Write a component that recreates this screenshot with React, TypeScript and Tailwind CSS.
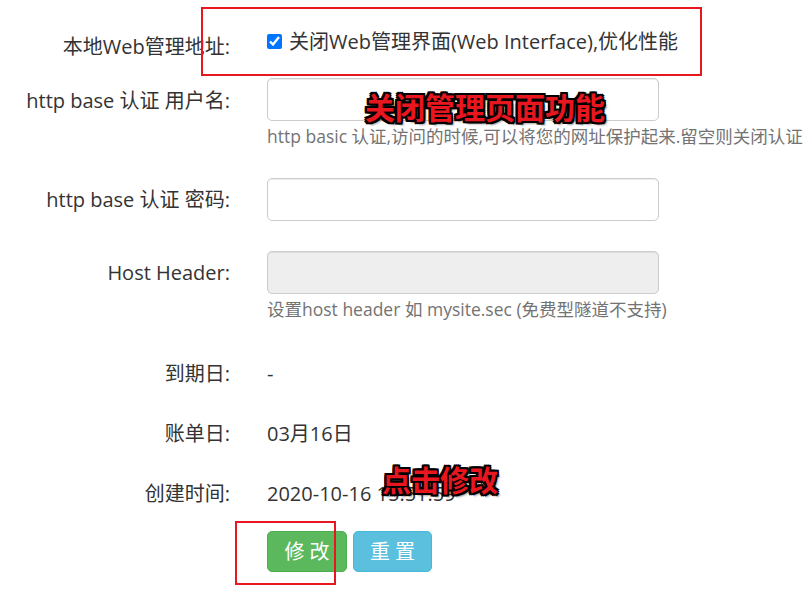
import React from "react";

const font = { fontFamily: '"Open Sans", "Noto Sans CJK SC", sans-serif' };

function Label({ children, pt }: { children: React.ReactNode; pt: string }) {
  return (
    <div className={`w-[230px] shrink-0 text-right text-[#333] whitespace-nowrap ${pt}`}>{children}</div>
  );
}

export default function App() {
  const outline =
    "[text-shadow:-2px_-2px_0_#000,2px_-2px_0_#000,-2px_2px_0_#000,2px_2px_0_#000,0_2px_0_#000,0_-2px_0_#000,2px_0_0_#000,-2px_0_0_#000,3px_3px_2px_rgba(0,0,0,0.35)]";
  return (
    <div
      className="relative w-[808px] h-[594px] overflow-hidden bg-white text-[20px] leading-[27px] text-[#333]"
      style={font}
    >
      <div className="pt-[28px]">
        {/* Row 1 */}
        <div className="flex items-start">
          <Label pt="pt-[5px]">本地Web管理地址:</Label>
          <div className="ml-[37px] flex items-center gap-[7px]">
            <input
              type="checkbox"
              defaultChecked
              className="m-0 w-[15px] h-[15px] accent-[#0075ff]"
            />
            <span className="whitespace-nowrap">关闭Web管理界面(Web Interface),优化性能</span>
          </div>
        </div>

        {/* Row 2 */}
        <div className="flex items-start mt-[18px]">
          <Label pt="pt-[9px]">http base 认证 用户名:</Label>
          <div className="ml-[37px] w-[392px]">
            <div className="h-[43px] w-full rounded-[5px] border border-[#ccc] bg-white shadow-[inset_0_1px_1px_rgba(0,0,0,0.075)]" />
            <div className="mt-[2px] whitespace-nowrap text-[17.5px] text-[#737373]">
              http basic 认证,访问的时候,可以将您的网址保护起来.留空则关闭认证
            </div>
          </div>
        </div>

        {/* Row 3 */}
        <div className="flex items-start mt-[28px]">
          <Label pt="pt-[8px]">http base 认证 密码:</Label>
          <div className="ml-[37px] w-[392px]">
            <div className="h-[43px] w-full rounded-[5px] border border-[#ccc] bg-white shadow-[inset_0_1px_1px_rgba(0,0,0,0.075)]" />
          </div>
        </div>

        {/* Row 4 */}
        <div className="flex items-start mt-[30px]">
          <Label pt="pt-[8px]">Host Header:</Label>
          <div className="ml-[37px] w-[392px]">
            <div className="h-[43px] w-full rounded-[5px] border border-[#ccc] bg-[#eee] shadow-[inset_0_1px_1px_rgba(0,0,0,0.075)]" />
            <div className="mt-[2px] whitespace-nowrap text-[17.5px] text-[#737373]">
              设置host header 如 mysite.sec (免费型隧道不支持)
            </div>
          </div>
        </div>

        {/* Row 5 */}
        <div className="flex items-start mt-[37px]">
          <Label pt="pt-0">到期日:</Label>
          <div className="ml-[37px]">-</div>
        </div>

        {/* Row 6 */}
        <div className="flex items-start mt-[33px]">
          <Label pt="pt-0">账单日:</Label>
          <div className="ml-[37px]">03月16日</div>
        </div>

        {/* Row 7 */}
        <div className="flex items-start mt-[33px]">
          <Label pt="pt-0">创建时间:</Label>
          <div className="ml-[37px] whitespace-nowrap">2020-10-16 15:51:59</div>
        </div>

        {/* Buttons */}
        <div className="flex mt-[24px] ml-[267px] gap-[6px]">
          <button className="h-[41px] w-[80px] rounded-[5px] border border-[#4cae4c] bg-[#5cb85c] text-white tracking-[5px] pl-[5px]">
            修改
          </button>
          <button className="h-[41px] w-[79px] rounded-[5px] border border-[#46b8da] bg-[#5bc0de] text-white tracking-[5px] pl-[5px]">
            重置
          </button>
        </div>
      </div>

      {/* Annotation boxes */}
      <div className="absolute left-[201px] top-[7px] w-[501px] h-[69px] border-2 border-[#e8161e]" />
      <div className="absolute left-[235px] top-[521px] w-[101px] h-[64px] border-2 border-[#e8161e]" />

      {/* Annotation texts */}
      <div
        className={`absolute left-[365px] top-[90px] whitespace-nowrap text-[30px] leading-[32px] font-bold text-[#e8161e] ${outline}`}
        style={{ fontFamily: '"Noto Sans CJK SC", sans-serif' }}
      >
        关闭管理页面功能
      </div>
      <div
        className={`absolute left-[382px] top-[463px] whitespace-nowrap text-[29px] leading-[32px] font-bold text-[#e8161e] ${outline}`}
        style={{ fontFamily: '"Noto Sans CJK SC", sans-serif' }}
      >
        点击修改
      </div>
    </div>
  );
}
